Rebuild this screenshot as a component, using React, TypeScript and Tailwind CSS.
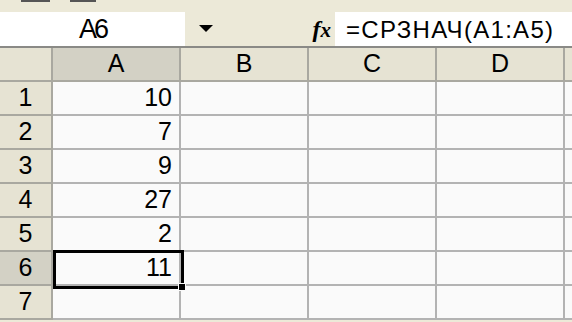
import React from "react";

const cols = ["A", "B", "C", "D"];
const data: (string | null)[] = ["10", "7", "9", "27", "2", "11", null];

export default function App() {
  return (
    <div
      className="w-[572px] h-[322px] overflow-hidden bg-[#ECE9D8] text-black"
      style={{ fontFamily: '"Liberation Sans", Arial, sans-serif' }}
    >
      {/* toolbar remnants */}
      <div className="h-[12px] flex items-start gap-[20px] pl-[21px]">
        <div className="w-[29px] h-[2px] bg-[#555]" />
        <div className="w-[26px] h-[2px] bg-[#555]" />
      </div>
      {/* formula bar */}
      <div className="h-[34px] flex items-stretch">
        <div className="w-[185px] bg-white flex items-center justify-center text-[27px] tracking-[-3px] pt-[1px]">
          A6
        </div>
        <div className="w-[42px] flex items-center justify-center">
          <svg width="14" height="8" viewBox="0 0 14 8">
            <polygon points="0,0 14,0 7,7" fill="#000" />
          </svg>
        </div>
        <div className="w-[108px] flex items-center justify-end pr-[4px]">
          <span
            className="inline-flex items-baseline italic font-bold leading-none"
            style={{ fontFamily: '"Liberation Serif", "Times New Roman", serif' }}
          >
            <span className="text-[24px]">f</span>
            <span className="text-[21px]">x</span>
          </span>
        </div>
        <div className="flex-1 bg-white flex items-center pl-[11px] text-[24px] tracking-[1.3px] whitespace-nowrap pt-[1px]">
          =СРЗНАЧ(A1:A5)
        </div>
      </div>
      <div className="h-[2px] bg-[#8A8A86]" />
      {/* sheet */}
      <div className="relative">
        <div className="flex h-[34px]">
          <div className="w-[53px] shrink-0 bg-[#E6E3D3] border-r-2 border-b-2 border-[#A9A8A0]" />
          {cols.map((c) => (
            <div
              key={c}
              className={`w-[128px] shrink-0 flex items-center justify-center text-[25px] border-r-2 border-b-2 border-[#A9A8A0] ${
                c === "A" ? "bg-[#D3D1C5]" : "bg-[#E6E3D3]"
              }`}
            >
              {c}
            </div>
          ))}
          <div className="flex-1 bg-[#E6E3D3] border-b-2 border-[#A9A8A0]" />
        </div>
        {data.map((v, i) => (
          <div key={i} className="flex h-[34px]">
            <div
              className={`w-[53px] shrink-0 flex items-center justify-center text-[25px] border-r-2 border-b-2 border-[#A9A8A0] ${
                i === 5 ? "bg-[#D3D1C5]" : "bg-[#E6E3D3]"
              }`}
            >
              {i + 1}
            </div>
            <div className="w-[128px] shrink-0 bg-[#FAFAFA] flex items-center justify-end pr-[7px] text-[25px] border-r-2 border-b-2 border-[#B3B3B3]">
              {v}
            </div>
            {[0, 1, 2].map((k) => (
              <div key={k} className="w-[128px] shrink-0 bg-[#FAFAFA] border-r-2 border-b-2 border-[#B3B3B3]" />
            ))}
            <div className="flex-1 bg-[#FAFAFA] border-b-2 border-[#B3B3B3]" />
          </div>
        ))}
        {/* selection */}
        <div className="absolute left-[53px] top-[202px] w-[131px] h-[39px] border-[3px] border-black pointer-events-none" />
        <div className="absolute left-[178px] top-[235px] w-[8px] h-[8px] bg-black border border-[#FAFAFA]" />
      </div>
    </div>
  );
}
